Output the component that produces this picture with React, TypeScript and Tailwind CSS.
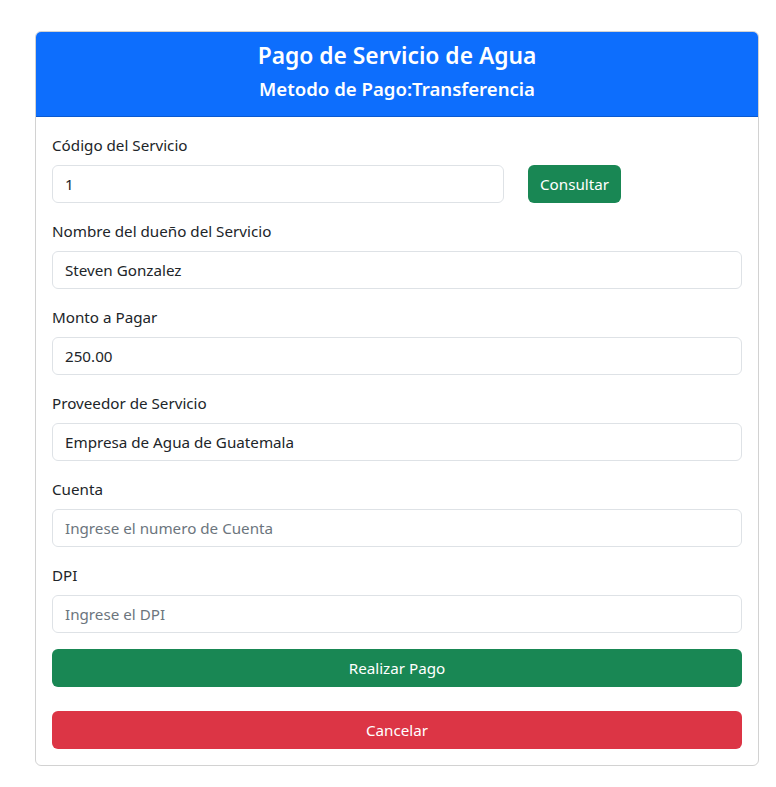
import React from 'react'

const font = { fontFamily: '"Noto Sans", "Open Sans", sans-serif' }

function Field({ label, value, placeholder }: { label: string; value?: string; placeholder?: string }) {
  return (
    <div className="mb-4">
      <label className="block mb-2 text-[15.2px] leading-6 text-[#212529]">{label}</label>
      <input
        className="block w-full h-[38px] px-3 text-[15.2px] text-[#212529] placeholder:text-[#6c757d] border border-[#dee2e6] rounded-[6px] bg-white outline-none"
        defaultValue={value}
        placeholder={placeholder}
      />
    </div>
  )
}

export default function App() {
  return (
    <div className="min-h-screen bg-white pt-[31px]" style={font}>
      <div className="ml-[35px] w-[724px] border border-black/[0.175] rounded-[6px] overflow-hidden">
        <div className="bg-[#0d6efd] text-white text-center px-4 pt-[9px] pb-[15px] border-b border-black/[0.175]">
          <h3 className="text-[22.8px] leading-[30px] font-semibold mb-[6px]">Pago de Servicio de Agua</h3>
          <h5 className="text-[18.6px] leading-[24px] font-semibold">Metodo de Pago:Transferencia</h5>
        </div>
        <div className="p-4">
          <div className="mb-4">
            <label className="block mb-2 text-[15.2px] leading-6 text-[#212529]">Código del Servicio</label>
            <div className="grid grid-cols-3 gap-x-6">
              <input
                className="col-span-2 block w-full h-[38px] px-3 text-[15.2px] text-[#212529] border border-[#dee2e6] rounded-[6px] outline-none"
                defaultValue="1"
              />
              <div>
                <button className="h-[38px] px-3 text-[15.2px] text-white bg-[#198754] rounded-[6px]">Consultar</button>
              </div>
            </div>
          </div>
          <Field label="Nombre del dueño del Servicio" value="Steven Gonzalez" />
          <Field label="Monto a Pagar" value="250.00" />
          <Field label="Proveedor de Servicio" value="Empresa de Agua de Guatemala" />
          <Field label="Cuenta" placeholder="Ingrese el numero de Cuenta" />
          <Field label="DPI" placeholder="Ingrese el DPI" />
          <button className="block w-full h-[38px] text-[15.2px] text-white bg-[#198754] rounded-[6px]">Realizar Pago</button>
          <button className="block w-full h-[38px] mt-6 text-[15.2px] text-white bg-[#dc3545] rounded-[6px]">Cancelar</button>
        </div>
      </div>
    </div>
  )
}
